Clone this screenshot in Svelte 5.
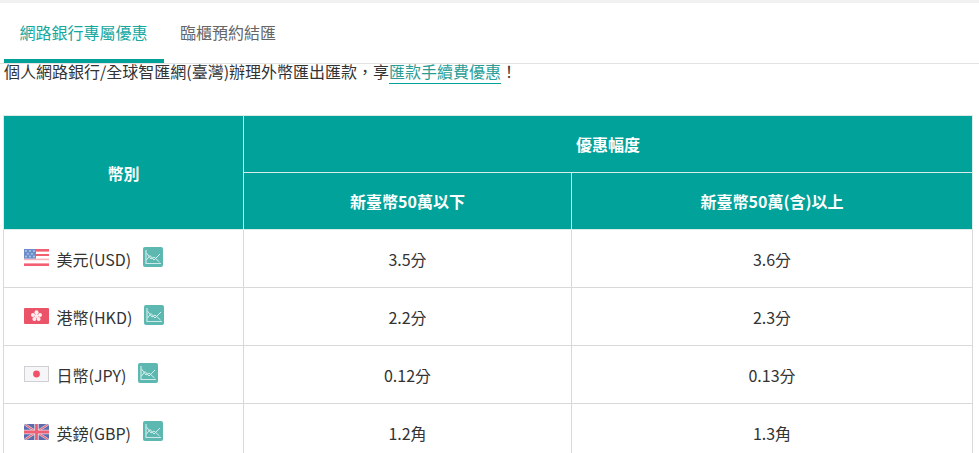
<script>
  const rows = [
    { flag: 'us', name: '美元(USD)', a: '3.5分', b: '3.6分' },
    { flag: 'hk', name: '港幣(HKD)', a: '2.2分', b: '2.3分' },
    { flag: 'jp', name: '日幣(JPY)', a: '0.12分', b: '0.13分' },
    { flag: 'gb', name: '英鎊(GBP)', a: '1.2角', b: '1.3角' }
  ];
</script>

<div class="page">
  <nav class="tabs">
    <a class="tab active" href="#a">網路銀行專屬優惠</a>
    <a class="tab" href="#b">臨櫃預約結匯</a>
  </nav>
  <p class="intro">個人網路銀行/全球智匯網(臺灣)辦理外幣匯出匯款，享<a href="#c">匯款手續費優惠</a>！</p>
  <table>
    <colgroup><col class="c1" /><col class="c2" /><col class="c3" /></colgroup>
    <thead>
      <tr><th rowspan="2">幣別</th><th colspan="2">優惠幅度</th></tr>
      <tr><th>新臺幣50萬以下</th><th>新臺幣50萬(含)以上</th></tr>
    </thead>
    <tbody>
      {#each rows as r}
        <tr>
          <td class="cur">
            <div class="curwrap">
              <svg class="flag" viewBox="0 0 25 17" width="25" height="17" aria-hidden="true">
                {#if r.flag === 'us'}
                  <rect width="25" height="17" fill="#fff" />
                  <rect width="25" height="2.6" y="0" fill="#f25f72" />
                  <rect width="25" height="2" y="5" fill="#f25f72" />
                  <rect width="25" height="1.6" y="9.6" fill="#f9b5be" />
                  <rect width="25" height="2.6" y="14.4" fill="#f25f72" />
                  <rect width="12" height="9.6" fill="#6c8fcb" />
                  <g fill="#b9cbe8">
                    <circle cx="2" cy="2" r=".9" /><circle cx="6" cy="2" r=".9" /><circle cx="10" cy="2" r=".9" />
                    <circle cx="4" cy="4.8" r=".9" /><circle cx="8" cy="4.8" r=".9" />
                    <circle cx="2" cy="7.5" r=".9" /><circle cx="6" cy="7.5" r=".9" /><circle cx="10" cy="7.5" r=".9" />
                  </g>
                {:else if r.flag === 'hk'}
                  <rect width="25" height="16" y="1" rx="1" fill="#eb5468" />
                  <g fill="#fdeef0">
                    <circle cx="12.5" cy="5.2" r="2" />
                    <circle cx="16" cy="8" r="2" />
                    <circle cx="14.6" cy="12" r="2" />
                    <circle cx="10.4" cy="12" r="2" />
                    <circle cx="9" cy="8" r="2" />
                    <circle cx="12.5" cy="9" r="2" />
                  </g>
                {:else if r.flag === 'jp'}
                  <rect x=".5" y="1.5" width="24" height="15" fill="#f6f6f8" stroke="#cfcfd4" />
                  <circle cx="12.5" cy="9" r="3.4" fill="#f25066" />
                {:else}
                  <rect width="25" height="16" y="1" rx="2" fill="#5a6cab" />
                  <path d="M1 1.5 24 16.5M24 1.5 1 16.5" stroke="#d9d9ea" stroke-width="2.4" />
                  <path d="M1 1.5 24 16.5M24 1.5 1 16.5" stroke="#ee5f74" stroke-width="1.2" />
                  <path d="M12.5 1V17M0 9H25" stroke="#e8dfe8" stroke-width="4.4" />
                  <path d="M12.5 1V17M0 9H25" stroke="#ee5f74" stroke-width="2.8" />
                {/if}
              </svg>
              <span class="name">{r.name}</span>
              <svg class="chart" viewBox="0 0 20 20" width="20" height="20" aria-hidden="true">
                <rect width="20" height="20" rx="2" fill="#5db8b1" />
                <path d="M3 3V16.5H18" fill="none" stroke="#cdeae7" stroke-width="1.2" />
                <path d="M3.5 6 8 12 11 10 16.5 15" fill="none" stroke="#d4efec" stroke-width="1" />
                <path d="M3.5 13 7 8.5 11 13 17 7" fill="none" stroke="#d4efec" stroke-width="1" />
              </svg>
            </div>
          </td>
          <td>{r.a}</td>
          <td>{r.b}</td>
        </tr>
      {/each}
    </tbody>
  </table>
</div>

<style>
  :global(html), :global(body) {
    margin: 0;
    height: 453px;
    overflow: hidden;
    background: #fff;
  }
  .page {
    font-family: "Noto Sans CJK TC", "Noto Sans", sans-serif;
    font-size: 16px;
    color: #333;
    border-top: 3px solid #f1f1f1;
  }
  .tabs {
    display: flex;
    height: 61px;
    box-sizing: border-box;
    border-bottom: 1px solid #e3e3e3;
    padding-left: 4px;
  }
  .tab {
    display: block;
    height: 60px;
    box-sizing: border-box;
    padding: 16px 16px 0;
    line-height: 26px;
    color: #666;
    text-decoration: none;
  }
  .tab.active {
    color: #16a89f;
    border-bottom: 4px solid #00a29a;
    padding-left: 15.5px;
    padding-right: 16.5px;
  }
  .intro {
    margin: 0 0 0 4px;
    height: 51px;
    line-height: 14px;
    color: #333;
  }
  .intro a {
    color: #2a9d96;
    text-decoration: none;
    border-bottom: 1px solid #00a29a;
  }
  table {
    margin-left: 3px;
    width: 970px;
    border-collapse: collapse;
    table-layout: fixed;
  }
  .c1 { width: 240px; }
  .c2 { width: 328px; }
  th {
    height: 57px;
    box-sizing: border-box;
    padding: 0;
    background: #00a29a;
    color: #fff;
    font-weight: 700;
    font-size: 16px;
    border: 1px solid #d9ecea;
    text-align: center;
  }
  td {
    height: 58px;
    box-sizing: border-box;
    padding: 0;
    border: 1px solid #d9d9d9;
    text-align: center;
    color: #333;
  }
  .curwrap {
    display: flex;
    align-items: center;
    padding-left: 20px;
  }
  .name { margin-left: 7.5px; }
  .flag { flex: none; margin-top: -3px; }
  .chart { flex: none; margin: -3px 0 0 12px; }
</style>
